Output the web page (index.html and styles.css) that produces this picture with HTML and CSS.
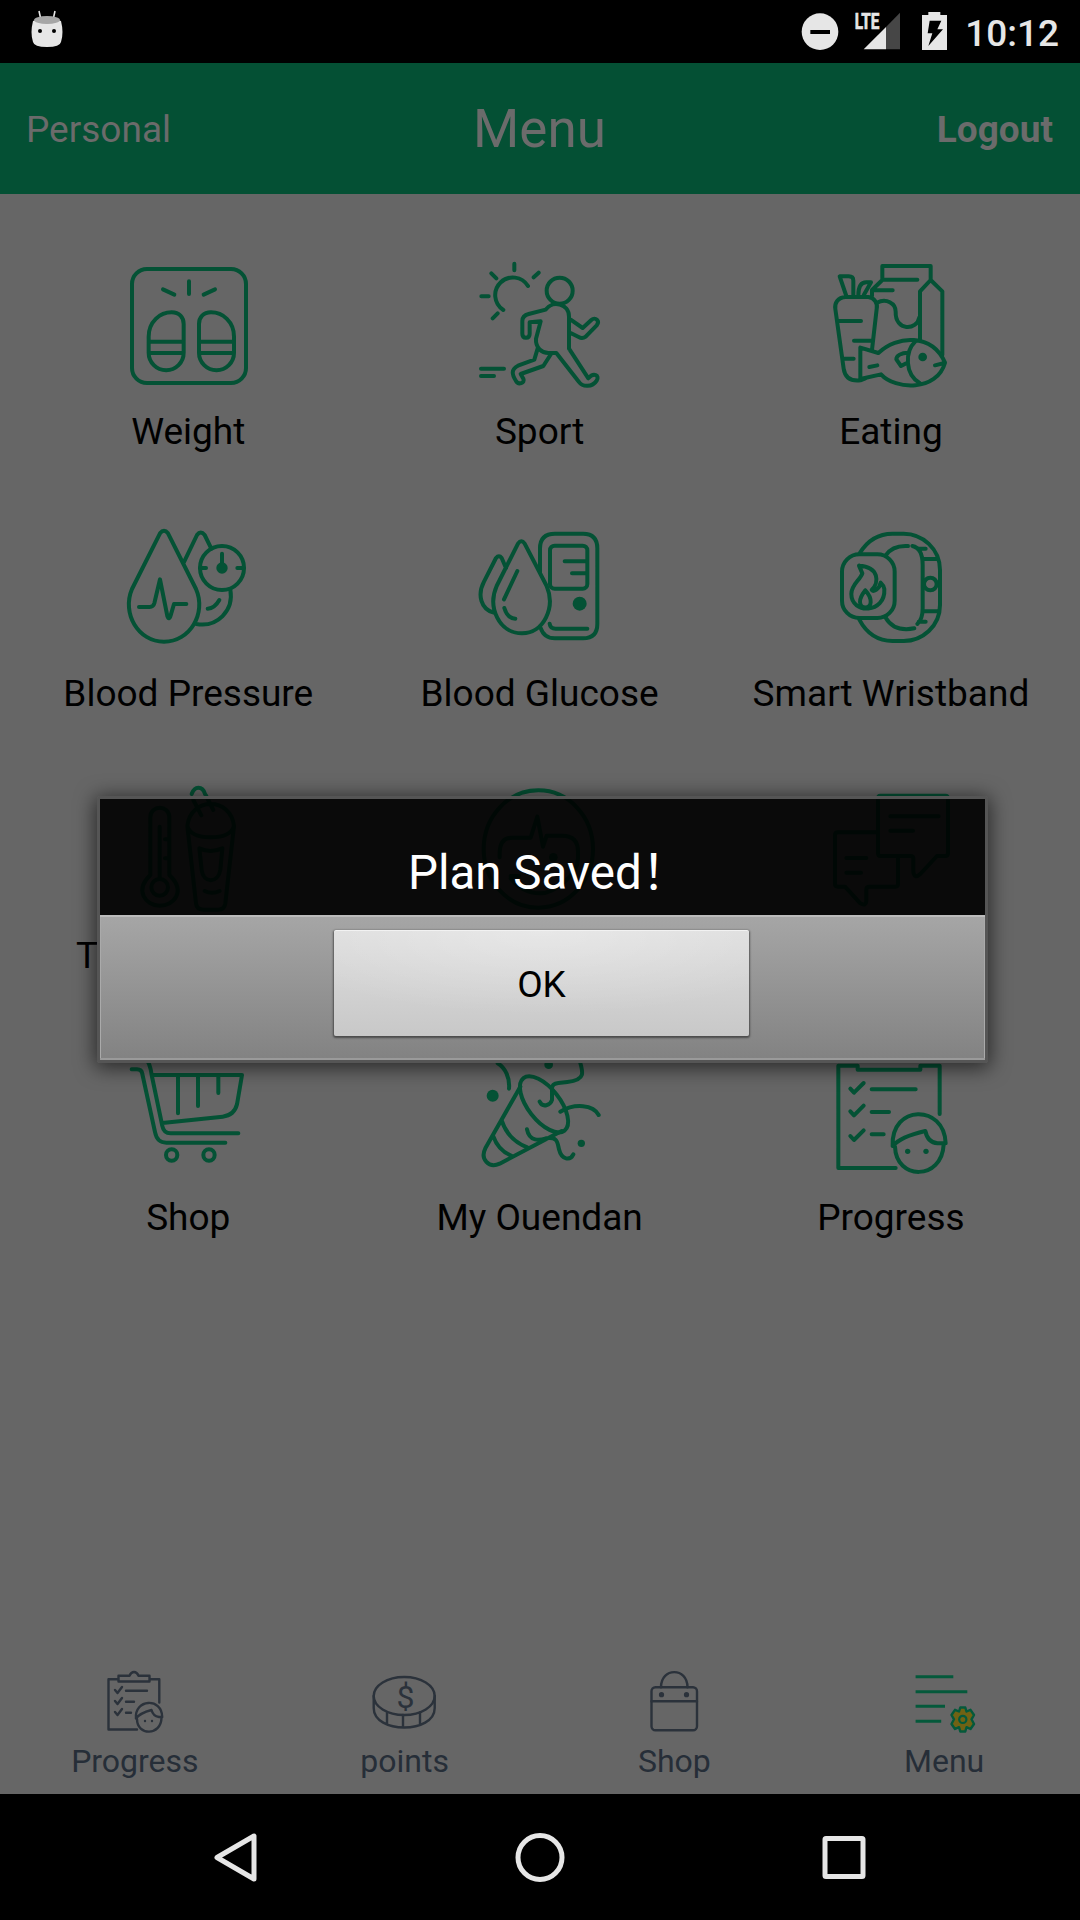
FILE: index.html
```html
<!DOCTYPE html>
<html lang="en">
<head>
<meta charset="utf-8">
<title>Menu</title>
<link rel="stylesheet" href="styles.css">
</head>
<body>
<div class="status">
  <svg class="robot" viewBox="0 0 36 40"><path class="antenna" d="M9 2l2 9M25 2l-2 9"/><path class="fill" d="M3 12Q17 5 31 12Q34 24 31 33Q30 38 17 38Q4 38 3 33Q0 24 3 12Z"/><ellipse class="lid" cx="17" cy="11" rx="13" ry="4"/><circle cx="10" cy="22" r="2"/><circle cx="24" cy="22" r="2"/></svg>
  <svg class="signals" viewBox="60 30 450 132">
    <circle class="fill" cx="120" cy="95" r="55"/><path d="M91 90h59v12H91z"/>
    <path class="fill" d="M251 148L318 81V148Z"/><path class="dim" d="M318 81L360 38V148H318Z"/>
    <text class="lte" x="224" y="87" textLength="74" lengthAdjust="spacingAndGlyphs">LTE</text>
    <path class="fill" d="M426 45h19v-9h36v9h20v105h-75z"/><path d="M449 62h35l-12 26h17l-44 50 12-38h-14z"/>
  </svg>
  <span class="clock">10:12</span>
</div>
<header class="bar"><span class="bar-side">Personal</span><h1 class="bar-title">Menu</h1><span class="bar-side bar-end">Logout</span></header>
<main class="grid">
  <div class="cell"><svg class="icon" viewBox="-6 0 540 480">
    <rect x="96" y="87" width="342" height="342" rx="45"/>
    <path d="M189 148L223 164M267 124V162M345 148L311 164M146 290C146 245 180 217 215 217C238 217 251 232 251 252V338A52.500 52.500 0 0 1 146 338ZM146 305H251M146 339H251M402 290C402 245 368 217 333 217C310 217 297 232 297 252V338A52.500 52.500 0 0 0 402 338ZM297 305H402M297 339H402"/>
  </svg><span>Weight</span></div>
  <div class="cell"><svg class="icon" viewBox="-2 0 540 480">
    <circle cx="327" cy="152" r="39"/>
    <path d="M158 210A53 53 0 1 1 232 138M191 71V91M122 100L137 115M92 169H114M126 235L141 220M264 98L249 112M91 386H160M91 408H130"/>
    <path d="M355 326V230C355 190 305 180 285 209L234 222Q215 227 215 243V281Q215 293 226 293Q237 293 237 281V247L270 244L256 296C254 325 275 339 293 339H317L385 426C395 441 425 443 438 422C448 406 429 396 413 415L355 326M360 239L396 264L422 240C434 229 449 243 438 256L405 290Q395 297 384 291L360 279M262 322L251 359L202 377C180 388 184 404 196 423C203 436 224 429 218 416L210 402L278 378L301 342"/>
  </svg><span>Sport</span></div>
  <div class="cell"><svg class="icon" viewBox="2 0 540 480">
    <path d="M136 171H204C222 173 233 190 229 207L215 329M136 171C112 172 102 190 105 207L130 386C134 413 150 424 180 421L195 415M138 168L118 109H145Q159 109 159 122V168M174 166C174 143 179 127 198 127H212L190 166M113 243H182M161 302H214M132 356H160"/>
    <path d="M246 116V78H391V120L426 154V345M391 120L359 154V302M246 119H351M246 120L215 150V167M218 151H277M230 188C258 174 286 190 286 215C284 275 350 272 357 232"/>
    <path d="M180 323V417L242 403C285 450 410 455 434 368C395 280 290 285 234 339ZM345 304C313 335 313 404 359 430M432 369L404 376M207 381L231 376M323 338C303 338 288 347 288 358L302 378L315 371"/>
    <circle class="dot" cx="367" cy="351" r="13"/>
  </svg><span>Eating</span></div>

  <div class="cell"><svg class="icon" viewBox="-6 -24 540 480">
    <path d="M180 70Q192 55 204 70L288 237C320 310 270 395 192 395C114 395 65 310 96 237ZM117 291H149Q160 291 163 280L180 208L202 318Q207 332 212 316L222 282H259M250 160L291 75Q302 60 314 75L334 116M289 342C352 353 402 302 391 239M323 296Q344 295 358 270M300 174H318M412 174H431M366 131V174"/>
    <circle cx="366" cy="174" r="66"/><circle class="dot" cx="366" cy="174" r="17"/>
  </svg><span>Blood Pressure</span></div>
  <div class="cell"><svg class="icon" viewBox="-2 -24 540 480">
    <path d="M202 101Q212 87 222 101L288 228C315 292 280 370 214 370C145 370 110 292 138 228ZM200 183L160 268M161 294Q170 325 194 326M166 174L153 144Q145 134 136 144L100 215C79 255 91 298 129 308M268 188V115Q268 71 313 71H397Q440 71 440 115V342Q440 385 397 385H313Q280 385 270 354M297 341Q299 356 315 356H410M342 154H408M364 190H408"/>
    <rect x="298" y="107" width="112" height="129" rx="14"/><circle class="dot" cx="387" cy="281" r="21"/>
  </svg><span>Blood Glucose</span></div>
  <div class="cell"><svg class="icon" viewBox="2 -24 540 480">
    <rect x="125" y="133" width="158" height="191" rx="52"/>
    <path d="M178 130Q213 71 277 71H310C366 71 419 116 419 180V285C419 349 366 393 310 393H277Q211 393 177 329M256 136Q277 105 323 108M336 108Q367 114 367 165V295Q367 328 351 342M355 116H376M355 335H376M256 323Q282 367 342 355M369 147H411M369 304H411M176 167L186 190C179 211 153 223 153 252C153 313 256 312 252 237Q250 226 241 218C237 239 218 246 214 240C237 218 237 170 176 167M195 241Q178 263 179 276C180 298 211 297 211 277Q212 259 195 241"/>
    <circle cx="390" cy="222" r="19"/>
  </svg><span>Smart Wristband</span></div>

  <div class="cell"><svg class="icon" viewBox="114 -18 540 480">
    <path d="M271 315V142C271 104 328 104 328 142V315C379 364 342 407 299 407C256 407 223 360 271 315M299 170V322M315 208H325M315 265H325M395 72Q402 53 415 53Q430 53 435 72M382 168L408 400Q410 419 430 419H475Q493 419 496 400L522 168C512 80 392 80 382 168Q392 202 452 202Q512 202 522 168M400 90L424 136M437 75L460 120M418 235Q451 251 487 235L481 300C474 341 430 341 425 300ZM434 363Q456 374 479 363"/>
    <circle cx="299" cy="352" r="25"/>
  </svg><span>Thermometer</span></div>
  <div class="cell"><svg class="icon" viewBox="-272 -18 540 480">
    <ellipse cx="-7" cy="237" rx="164" ry="176"/>
    <path d="M-123 262V250Q-123 203 -85 203H-30L-10 140L7 230L18 197H65Q112 197 112 245V265C112 315 40 370 0 370C-40 370 -72 350 -90 325M-90 318H-65"/><circle class="dot" cx="38" cy="262" r="13"/>
  </svg></div>
  <div class="cell"><svg class="icon" viewBox="782 -18 540 480">
    <path d="M1020 77H1215Q1223 77 1223 86V250Q1223 258 1215 258H1190L1140 312Q1122 328 1119 305V266Q1119 258 1110 258H1020Q1013 258 1013 250V86Q1013 77 1020 77M1013 187H893Q884 187 884 196V342Q884 350 893 350H914L960 400Q978 410 978 390V358Q978 350 987 350H1065Q1073 350 1073 342V262M1050 139H1195M1050 182H1118M918 264H978M918 308H962"/>
  </svg></div>

  <div class="cell"><svg class="icon" viewBox="1 0 540 480">
    <path d="M102 130H118Q132 130 134 144L172 318Q178 350 206 350H383M140 90Q158 112 162 147L194 300Q198 322 219 322H422M163 147H433L418 235Q410 268 375 272L194 291M241 147V262M301 147V240M362 147V201"/>
    <circle cx="222" cy="387" r="17"/><circle cx="334" cy="387" r="17"/>
  </svg><span>Shop</span></div>
  <div class="cell"><svg class="icon" viewBox="0 0 540 480">
    <ellipse cx="282" cy="235" rx="100" ry="48" transform="rotate(52 282 235)"/>
    <path d="M211 182L106 367C90 399 116 428 149 413L335 315M155 283Q174 342 232 364M130 331Q145 374 186 390M231 310C238 348 270 343 288 337C323 332 322 349 327 370C335 403 361 404 370 385M269 227C278 246 301 238 306 222V187Q306 173 325 171L352 168C408 162 401 140 386 95M331 257C374 231 430 236 446 267M143 112C166 126 180 155 177 188"/>
    <circle class="dot" cx="128" cy="209" r="18"/><circle class="dot" cx="296" cy="116" r="13"/><circle class="dot" cx="394" cy="352" r="11"/>
  </svg><span>My Ouendan</span></div>
  <div class="cell"><svg class="icon" viewBox="0 0 540 480">
    <path d="M284 426H112V119H170V131H358V119H416V264M148 188L159 200L188 171M212 190H344M148 256L159 268L188 239M212 258H264M148 330L159 342L188 313M212 325H248M275 360C269 235 430 233 434 352H410Q380 350 373 315Q299 332 275 360M282 362C285 464 423 464 428 355"/>
    <circle class="dot" cx="320" cy="376" r="8"/><circle class="dot" cx="375" cy="376" r="8"/>
  </svg><span>Progress</span></div>
</main>
<nav class="tabs">
  <div class="tab"><svg class="tab-icon" viewBox="1 0 80 80"><path d="M43 65.500H14.500V15.300H24.500M55.500 15.300H65.300V38.500M24.500 11.800H35.500Q37 8 40 8T44.500 11.800H55.500V17.500H24.500ZM21 26L23.500 29L28 23M32 26.700H53M21 37L23.500 40L28 34M32 37.700H40M21 48L23.500 51L28 45M32 48.700H37M42 54.500C40 35 68 33 68.200 53H65Q59 52 57.500 46Q46 49 42 54.500M43 55C43 72 67 72 67.500 54"/><circle class="eye" cx="51" cy="57" r="1.200"/><circle class="eye" cx="58" cy="57" r="1.200"/></svg><span>Progress</span></div>
  <div class="tab"><svg class="tab-icon" viewBox="1 0 80 80"><ellipse cx="40.200" cy="32" rx="30.500" ry="19"/><path d="M9.700 32V44C9.700 70 70.700 70 70.700 44V32M23 49V60M39 51V63M56 48.500V60"/><text class="dollar" x="41.500" y="43.500">$</text></svg><span>points</span></div>
  <div class="tab"><svg class="tab-icon" viewBox="0 0 80 80"><rect x="17.500" y="23.300" width="45.500" height="43" rx="4"/><path d="M17.500 37.300H63M27 23.300C27 3 53.500 3 53.500 23.300"/><circle class="eye" cx="27.500" cy="30.700" r="2.600"/><circle class="eye" cx="52.500" cy="30.700" r="2.600"/></svg><span>Shop</span></div>
  <div class="tab"><svg class="tab-icon menu-lines" viewBox="0 0 80 80"><path d="M11.600 12.700H49.300M11.600 27.700H63.300M11.600 42.300H41M11.600 57.300H37.200"/><path class="gear" d="M56.300 43.500H61.300L62.500 47.500L66.500 45.800L70 51L67.500 55.300L70 60L66.500 65L62.500 63.200L61.300 67.500H56.300L55 63.200L51 65L47.500 60L50 55.300L47.500 51L51 45.800L55 47.500Z"/><circle class="gear-hole" cx="58.800" cy="55.400" r="3.600"/></svg><span>Menu</span></div>
</nav>
<footer class="sysnav">
  <svg viewBox="0 0 60 60"><path d="M11 30.500L48 9V52Z"/></svg>
  <svg viewBox="0 0 60 60"><circle cx="30" cy="30.500" r="22"/></svg>
  <svg viewBox="0 0 60 60"><rect x="11" y="11.500" width="38" height="38" rx="1"/></svg>
</footer>
<div class="dialog"><p class="message">Plan Saved！</p><div class="actions"><button class="ok">OK</button></div></div>
</body>
</html>
```
FILE: styles.css
```css
*{box-sizing:border-box;margin:0}
body{width:1080px;height:1920px;display:flex;flex-direction:column;background:#666;font-family:Roboto,"Noto Sans CJK SC",sans-serif;position:relative;overflow:hidden}

.status{height:63px;background:#000;color:#e6e6e6;display:flex;align-items:center;padding:0 21px 0 30px}
.robot{width:36px;height:40px;margin:-6px auto 0 0}
.signals{width:150px;height:44px;margin:1px 15px 0 0}
.status .fill{fill:#e6e6e6}
.status .dim{fill:#464646}
.status .lid{fill:#a6a6a6}
.antenna{stroke:#e6e6e6;stroke-width:1.6}
.lte{fill:#e6e6e6;stroke:#e6e6e6;stroke-width:2;font-size:65px;font-weight:700}
.clock{font-size:37px;font-weight:500;padding-top:3px}

.bar{height:131px;background:#045034;color:#6b6b6b;display:grid;grid-template-columns:1fr 1fr 1fr;align-items:center;padding:1px 27px 0 26px}
.bar-side{font-size:37px;padding-top:1px}
.bar-end{text-align:right;font-weight:700}
.bar-title{font-size:53px;font-weight:400;text-align:center}

.grid{flex:1;display:grid;grid-template-columns:repeat(3,1fr);grid-auto-rows:262px;padding:46px 13.4px 0 12.600px}
.cell{display:flex;flex-direction:column;align-items:center;font-size:37px;line-height:43px;color:#000}
.icon{width:180px;height:160px;flex:none;margin-bottom:10px;fill:none;stroke:#045235;stroke-width:12;stroke-linecap:round;stroke-linejoin:round}
.dot{fill:#045235;stroke:none}

.tabs{height:144px;display:grid;grid-template-columns:repeat(4,1fr);color:#262e38;font-size:32px;padding:14px 2px 0 0;margin-right:-1px}
.tab{display:flex;flex-direction:column;align-items:center;line-height:38px}
.tab-icon{width:80px;height:80px;flex:none;margin-bottom:-2px;fill:none;stroke:#2b323b;stroke-width:2.4;stroke-linejoin:round;stroke-linecap:round}
.eye{fill:#2b323b;stroke:none}
.dollar{fill:#2b323b;stroke:none;font-size:32px;text-anchor:middle}
.menu-lines{stroke:#04593b;stroke-width:3;stroke-linecap:butt}
.gear{fill:#706214;stroke-width:2.4}
.gear-hole{stroke-width:2.2}

.sysnav{height:126px;background:#000;display:flex;justify-content:center;align-items:center;gap:244px}
.sysnav svg{width:60px;height:60px;fill:none;stroke:#e6e6e6;stroke-width:5;stroke-linejoin:round}

.dialog{position:absolute;left:97px;top:796px;width:891px;height:267px;border:3px solid #555;border-radius:3px;background:rgba(0,0,0,.9);background-clip:padding-box;box-shadow:0 3px 20px 2px rgba(0,0,0,.6)}
.message{height:116px;color:#fff;font-size:47.500px;line-height:56px;padding:46px 0 0 308px;white-space:nowrap}
.actions{height:145px;display:flex;justify-content:center;padding:15px 2px 0 0;background:linear-gradient(#a6a6a6,#828282);box-shadow:inset 0 2px #bcbcbc,inset 0 -2px #9a9a9a,inset 1px 0 #aaa,inset -1px 0 #aaa}
.ok{width:415px;height:106px;border:0;border-radius:2px;padding:3px 0 0;font:37px Roboto,sans-serif;color:#000;background:radial-gradient(ellipse 70% 80% at 50% 0,rgba(255,255,255,.3),transparent),linear-gradient(#dedede,#c8c8c8);box-shadow:inset 0 1px #f2f2f2,0 1px 2px 1px rgba(0,0,0,.45)}
```
